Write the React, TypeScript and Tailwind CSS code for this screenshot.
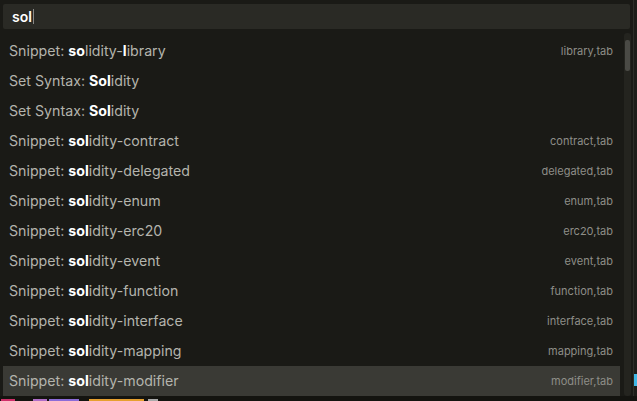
import React from "react";

type Part = { t: string; b?: boolean };

const rows: { parts: Part[]; hint?: string }[] = [
  { parts: [{ t: "Snippet: " }, { t: "so", b: true }, { t: "lidity-" }, { t: "l", b: true }, { t: "ibrary" }], hint: "library,tab" },
  { parts: [{ t: "Set Syntax: " }, { t: "Sol", b: true }, { t: "idity" }] },
  { parts: [{ t: "Set Syntax: " }, { t: "Sol", b: true }, { t: "idity" }] },
  { parts: [{ t: "Snippet: " }, { t: "sol", b: true }, { t: "idity-contract" }], hint: "contract,tab" },
  { parts: [{ t: "Snippet: " }, { t: "sol", b: true }, { t: "idity-delegated" }], hint: "delegated,tab" },
  { parts: [{ t: "Snippet: " }, { t: "sol", b: true }, { t: "idity-enum" }], hint: "enum,tab" },
  { parts: [{ t: "Snippet: " }, { t: "sol", b: true }, { t: "idity-erc20" }], hint: "erc20,tab" },
  { parts: [{ t: "Snippet: " }, { t: "sol", b: true }, { t: "idity-event" }], hint: "event,tab" },
  { parts: [{ t: "Snippet: " }, { t: "sol", b: true }, { t: "idity-function" }], hint: "function,tab" },
  { parts: [{ t: "Snippet: " }, { t: "sol", b: true }, { t: "idity-interface" }], hint: "interface,tab" },
  { parts: [{ t: "Snippet: " }, { t: "sol", b: true }, { t: "idity-mapping" }], hint: "mapping,tab" },
  { parts: [{ t: "Snippet: " }, { t: "sol", b: true }, { t: "idity-modifier" }], hint: "modifier,tab" },
];

const App = () => {
  return (
    <div
      className="w-[637px] h-[401px] bg-[#1a1a16] overflow-hidden flex flex-col"
      style={{ fontFamily: 'Inter, "Liberation Sans", Arial, sans-serif' }}
    >
      <div className="flex flex-1 min-h-0">
        <div className="w-[633px] flex flex-col">
          {/* Search input */}
          <div className="mx-[3px] mt-[4px] h-[25px] bg-[#2a2a25] rounded-[2px] flex items-center pl-[9px]">
            <span className="text-white text-[14px] font-semibold leading-none">sol</span>
            <span className="w-px h-[15px] bg-[#888] ml-px" />
          </div>

          {/* Results */}
          <div className="flex mt-[7px]">
            <div className="w-[617px] ml-[3px] flex flex-col">
              {rows.map((row, i) => {
                const selected = i === rows.length - 1;
                return (
                  <div
                    key={i}
                    className={`h-[30px] flex items-center justify-between pl-[6px] pr-[7px] pb-[1px] ${
                      selected ? "bg-[#3a3a35]" : ""
                    }`}
                  >
                    <span className="text-[14.2px] text-[#b4b4ad]">
                      {row.parts.map((p, j) =>
                        p.b ? (
                          <b key={j} className="font-bold text-white">
                            {p.t}
                          </b>
                        ) : (
                          <span key={j}>{p.t}</span>
                        )
                      )}
                    </span>
                    {row.hint && <span className="text-[11px] text-[#8e8e88] mt-[2px]">{row.hint}</span>}
                  </div>
                );
              })}
            </div>
            {/* Scrollbar */}
            <div className="ml-[4px] w-[7px] h-[363px] -mt-[3px] bg-[#24241f] rounded-[3px] pt-[7px] flex justify-center">
              <div className="w-[5px] h-[31px] bg-[#4a4a45] rounded-[2px]" />
            </div>
          </div>
        </div>
        <div className="w-px bg-[#2e2e29]" />
        <div className="flex-1 bg-[#1d1d19] flex items-end pb-[10px]">
          <div className="w-[3px] h-[12px] bg-[#3fb7e6]" />
        </div>
      </div>
      {/* Editor content peeking below */}
      <div className="h-[5px] bg-[#141410] flex items-end gap-[2px] pl-[1px]">
        <div className="w-[14px] h-[2px] bg-[#d0306a]" />
        <div className="w-[14px] h-[2px] bg-[#b06ec8] ml-[16px]" />
        <div className="w-[30px] h-[2px] bg-[#8c6cd8]" />
        <div className="w-[55px] h-[2px] bg-[#e6a030] ml-[8px]" />
        <div className="w-[10px] h-[2px] bg-[#aaa] ml-[2px]" />
      </div>
    </div>
  );
};

export default App;
